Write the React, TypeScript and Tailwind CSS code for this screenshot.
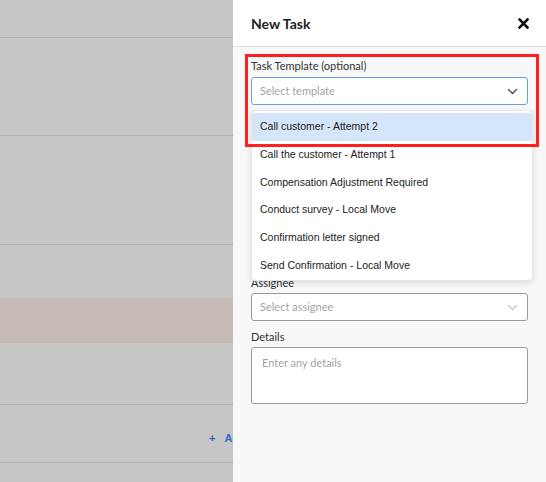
import React from "react";

const items = [
  "Call customer - Attempt 2",
  "Call the customer - Attempt 1",
  "Compensation Adjustment Required",
  "Conduct survey - Local Move",
  "Confirmation letter signed",
  "Send Confirmation - Local Move",
];

function Chevron({ color }: { color: string }) {
  return (
    <svg width="11" height="7" viewBox="0 0 11 7" fill="none">
      <path d="M1.5 1.5l4 4 4-4" stroke={color} strokeWidth="1.5" strokeLinecap="round" strokeLinejoin="round" />
    </svg>
  );
}

export default function App() {
  return (
    <div className="flex w-[546px] h-[482px] overflow-hidden" style={{ fontFamily: "Lato, 'Liberation Sans', sans-serif" }}>
      {/* left dimmed page */}
      <div className="w-[233px] h-full bg-[#c6c6c6] flex flex-col overflow-hidden shrink-0">
        <div className="h-[38px] border-b border-[#b0b0b0]" />
        <div className="h-[98px] border-b border-[#b0b0b0]" />
        <div className="h-[109px] border-b border-[#b0b0b0]" />
        <div className="h-[53px]" />
        <div className="h-[45px] bg-[#c5bab6]" />
        <div className="h-[62px] border-b border-[#b0b0b0]" />
        <div className="h-[58px] border-b border-[#b0b0b0] flex items-center pl-[209px] pt-[10px] whitespace-nowrap">
          <span className="text-[11px] font-bold text-[#2f6bd0]" style={{ fontFamily: "'Liberation Sans', sans-serif" }}>
            +&nbsp;&nbsp;&nbsp;Add
          </span>
        </div>
        <div className="flex-1" />
      </div>

      {/* right panel */}
      <div className="relative w-[313px] h-full bg-[#f8f8f8] flex flex-col">
        <div className="h-[47px] bg-white border-b border-[#dcdcdc] flex items-center justify-between pl-[18px] pr-[17px] shrink-0">
          <span className="text-[14px] font-bold text-[#222]">New Task</span>
          <svg width="11" height="11" viewBox="0 0 11 11">
            <path d="M1.5 1.5l8 8M9.5 1.5l-8 8" stroke="#111" strokeWidth="2.6" strokeLinecap="square" />
          </svg>
        </div>

        <div className="flex flex-col px-[18px] pt-[11px]">
          <label className="text-[11px] leading-[16px] text-[#333]">Task Template (optional)</label>
          <div className="mt-[3px] h-[28px] bg-white border border-[#6c9fdf] rounded-[3px] flex items-center justify-between pl-[8px] pr-[9px]">
            <span className="text-[11px] text-[#a3a3a3]">Select template</span>
            <Chevron color="#555" />
          </div>

          <div className="h-[170px]" />

          <label className="text-[11px] leading-[16px] text-[#333]">Assignee</label>
          <div className="mt-[2px] h-[28px] bg-white border border-[#9a9a9a] rounded-[3px] flex items-center justify-between pl-[8px] pr-[9px]">
            <span className="text-[11px] text-[#a3a3a3]">Select assignee</span>
            <Chevron color="#c8c8c8" />
          </div>

          <label className="mt-[8px] text-[11px] leading-[16px] text-[#333]">Details</label>
          <div className="mt-[2px] h-[57px] bg-white border border-[#9a9a9a] rounded-[3px] px-[10px] pt-[5px] leading-[16px]">
            <span className="text-[11px] leading-[16px] text-[#a3a3a3]">Enter any details</span>
          </div>
        </div>

        {/* dropdown menu */}
        <div
          className="absolute left-[18px] top-[110px] w-[282px] h-[171px] bg-white rounded-[4px] border border-[#e6e6e6] shadow-[0_2px_6px_rgba(0,0,0,0.12)] pt-[2px] overflow-hidden"
          style={{ fontFamily: "'Liberation Sans', Arial, sans-serif" }}
        >
          {items.map((t, i) => (
            <div
              key={t}
              className={`h-[27.8px] flex items-center pl-[8px] text-[10.5px] text-[#222] ${i === 0 ? "bg-[#d5e5fa]" : ""}`}
            >
              {t}
            </div>
          ))}
        </div>

        {/* red highlight annotation */}
        <div className="absolute left-[12px] top-[54px] w-[294px] h-[93px] border-[3px] border-[#ff1f1f] pointer-events-none" />
      </div>
    </div>
  );
}
